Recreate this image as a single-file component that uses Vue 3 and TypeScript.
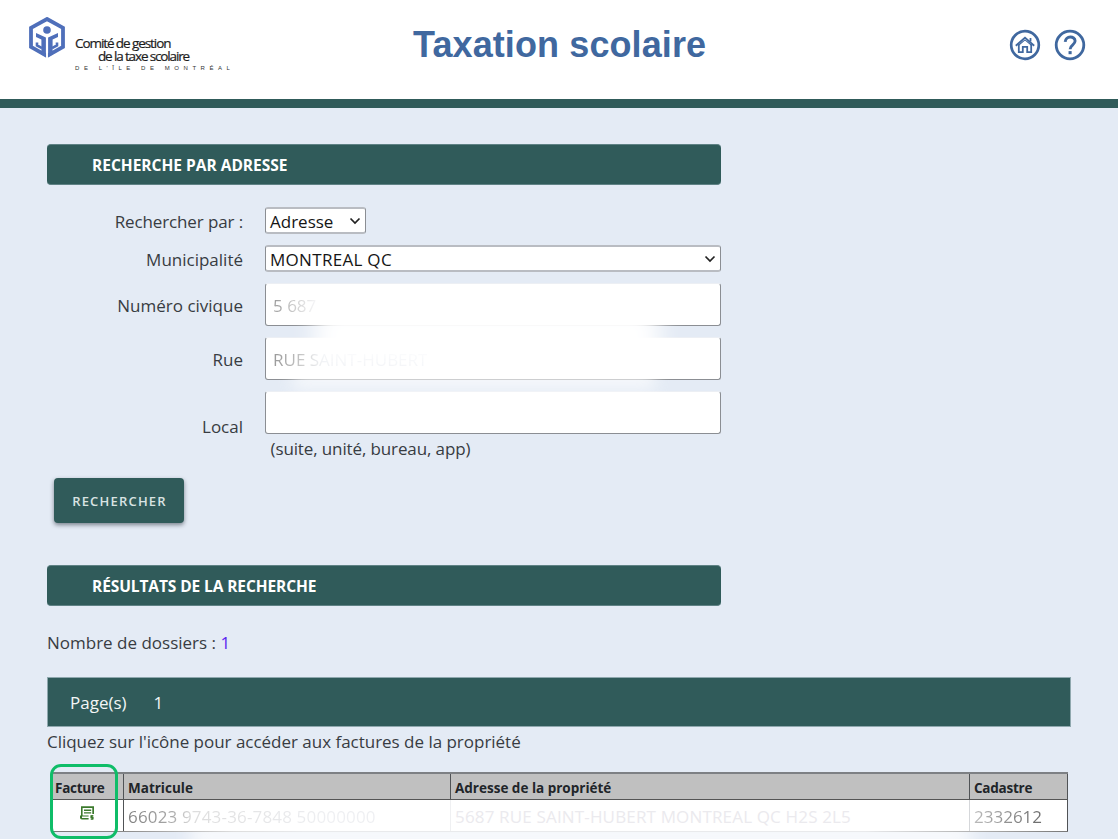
<script setup lang="ts">
interface Dossier {
  matricule: string
  adresse: string
  cadastre: string
}

const dossiers: Dossier[] = [
  {
    matricule: '66023 9743-36-7848 50000000',
    adresse: '5687 RUE SAINT-HUBERT MONTREAL QC H2S 2L5',
    cadastre: '2332612',
  },
]
</script>

<template>
  <div class="page">
    <header class="top">
      <div class="brand">
        <svg class="logo" viewBox="0 0 36 41" width="36" height="41">
          <path d="M18 2 L34 10.8 V30 L18 39 L2 30 V10.8 Z" fill="#fff" stroke="#4f6fba" stroke-width="3.8" />
          <circle cx="18" cy="13" r="3.8" fill="#4f6fba" />
          <path d="M7 16 L16.9 20.4 V40 L12.4 37.6 V22.6 L7 20 Z" fill="#4f6fba" />
          <path d="M29 16 L19.1 20.4 V40 L23.6 37.6 V22.6 L29 20 Z" fill="#4f6fba" />
          <path d="M8 25.4 V28.4 L13 31.2 M28 25.4 V28.4 L23 31.2" fill="none" stroke="#4f6fba" stroke-width="2.6" />
          <path d="M18 20 V41" stroke="#fff" stroke-width="1.9" />
        </svg>
        <div class="brand-text">
          <span class="b1">Comité de gestion</span>
          <span class="b2">de la taxe scolaire</span>
          <span class="b3">DE L'ÎLE DE MONTRÉAL</span>
        </div>
      </div>
      <h1>Taxation scolaire</h1>
      <nav class="tools">
        <svg viewBox="0 0 32 32" width="32" height="32" fill="none" stroke="#40689f">
          <circle cx="16" cy="16" r="13.8" stroke-width="2.7" />
          <path d="M6.8 16.7 L16 8.6 L25.2 16.7 M9.8 15.5 V23.2 H13.8 V17.8 H18.2 V23.2 H22.2 V15.5" stroke-width="1.8" />
          <path d="M9.8 16 L16 10.9 L22.2 16" stroke-width="1.1" />
          <path d="M21.5 9 V12.5" stroke-width="1.8" />
        </svg>
        <svg viewBox="0 0 32 32" width="32" height="32" fill="none" stroke="#40689f">
          <circle cx="16" cy="16" r="13.8" stroke-width="2.8" />
          <path d="M11.2 12.9 C11.4 6.4 21.1 6.6 21.1 12.1 C21.1 15.8 16.1 15.8 16.1 20.2" stroke-width="2.9" />
          <path d="M16.1 22.1 V25.2" stroke-width="3.1" />
        </svg>
      </nav>
    </header>

    <main>
      <h2 class="bar">RECHERCHE PAR ADRESSE</h2>

      <form class="form" @submit.prevent>
        <div class="row r1">
          <label class="l1">Rechercher par :</label>
          <div class="select short">
            <span>Adresse</span>
            <svg viewBox="0 0 12 8" width="12" height="8"><path d="M1.5 1.5 L6 6 L10.5 1.5" fill="none" stroke="#222" stroke-width="1.7" /></svg>
          </div>
        </div>
        <div class="row r2">
          <label>Municipalité</label>
          <div class="select">
            <span class="city">MONTREAL QC</span>
            <svg viewBox="0 0 12 8" width="12" height="8"><path d="M1.5 1.5 L6 6 L10.5 1.5" fill="none" stroke="#222" stroke-width="1.7" /></svg>
          </div>
        </div>
        <div class="row r3">
          <label>Numéro civique</label>
          <div class="input"><span class="civic">5 687</span></div>
        </div>
        <div class="row r3">
          <label>Rue</label>
          <div class="input"><span class="street">RUE SAINT-HUBERT</span></div>
        </div>
        <div class="row r3 r5">
          <label>Local</label>
          <div class="input"></div>
        </div>
        <p class="hint">(suite, unité, bureau, app)</p>
        <div class="veil veil-top"></div>
        <div class="veil veil-bottom"></div>
      </form>

      <button class="go" type="button">RECHERCHER</button>

      <h2 class="bar bar2">RÉSULTATS DE LA RECHERCHE</h2>
      <p class="count"><span>Nombre de dossiers : </span><b>1</b></p>

      <div class="pages"><span>Page(s)</span><span>1</span></div>
      <p class="help">Cliquez sur l'icône pour accéder aux factures de la propriété</p>

      <div class="results">
        <div class="row-veil"></div>
        <div class="tr th">
          <div class="tight">Facture</div>
          <div>Matricule</div>
          <div>Adresse de la propriété</div>
          <div class="tight">Cadastre</div>
        </div>
        <div v-for="d in dossiers" :key="d.matricule" class="tr td">
          <div class="fact">
            <svg viewBox="0 0 16 16" width="16" height="16">
              <path d="M2 1.2 H15 V9 H13.3 V3 H3.6 V10.4 H9.6 V11.6 H3 V13 H9.6 V14.6 H3 Q1 14.6 1 12.8 V10.4 H2 Z" fill="#3b7a2c" />
              <path d="M5 5.2 H12.2 M5 7.9 H12.2" stroke="#3b7a2c" stroke-width="1.4" />
              <path d="M14.4 10.9 H12 V12.5 H14 V14 H11.6 M13 10 V15" fill="none" stroke="#3b7a2c" stroke-width="1.2" />
            </svg>
          </div>
          <div class="mat"><span>{{ d.matricule }}</span></div>
          <div class="adr">{{ d.adresse }}</div>
          <div class="cad"><span>{{ d.cadastre }}</span></div>
        </div>
        <div class="highlight"></div>
      </div>
    </main>
  </div>
</template>

<style>
html,
body {
  margin: 0;
  overflow: hidden;
  background: #e4ebf5;
}
</style>

<style scoped>
* {
  box-sizing: border-box;
}
.page {
  width: 1118px;
  height: 839px;
  overflow: hidden;
  background: #e4ebf5;
  color: #383c42;
  font-family: "Open Sans", "Noto Sans", sans-serif;
  font-size: 17px;
  white-space: nowrap;
}
h1,
h2,
p {
  margin: 0;
}
.top {
  height: 108px;
  background: #fff;
  border-bottom: 9px solid #305b5a;
  display: grid;
  grid-template-columns: 413px 1fr 110px;
}
.brand {
  display: flex;
  padding: 17px 0 0 29px;
}
.logo {
  flex: none;
}
.brand-text {
  display: flex;
  flex-direction: column;
  padding: 20px 0 0 10px;
  color: #1c1c1c;
}
.b1,
.b2 {
  font-size: 13.5px;
  line-height: 13px;
  letter-spacing: -1.08px;
  -webkit-text-stroke: 0.2px #1c1c1c;
}
.b2 {
  padding-left: 23px;
  letter-spacing: -1.14px;
}
.b3 {
  margin-top: 1px;
  font: 6px/8px "Liberation Sans", Arial, sans-serif;
  letter-spacing: 4.55px;
  color: #333;
}
h1 {
  padding-top: 23px;
  font: bold 36px/44px "Liberation Sans", Arial, sans-serif;
  letter-spacing: 0.1px;
  color: #40689f;
}
.tools {
  display: flex;
  gap: 13px;
  padding: 29px 0 0 1.4px;
}
main {
  padding: 36px 47px 0;
}
.bar {
  width: 674px;
  height: 41px;
  padding-left: 45px;
  border: 1px solid #5f8285;
  border-width: 1px 0;
  border-radius: 4px;
  background: #305b5a;
  color: #fff;
  font-size: 15.5px;
  font-weight: 700;
  line-height: 40px;
}
.form {
  position: relative;
  height: 293px;
  padding-top: 22px;
}
.row {
  display: grid;
  grid-template-columns: 196px 456px;
  column-gap: 22px;
  align-items: center;
}
.row label {
  text-align: right;
  padding-top: 2px;
}
.row .l1 {
  letter-spacing: -0.12px;
}
.r1,
.r2 {
  height: 27px;
  margin-bottom: 11px;
}
.r3 {
  height: 43px;
  margin-bottom: 11px;
}
.r5 label {
  align-self: end;
  padding: 0;
  line-height: 14px;
}
.select {
  height: 27px;
  border: 1px solid;
  border-width: 2px 1px;
  border-color: #b9bcc2 #8b8e93;
  border-radius: 3px;
  background: #fff;
  color: #151515;
  display: flex;
  align-items: center;
  justify-content: space-between;
  padding: 1px 4px 0;
}
.city {
  letter-spacing: 0.3px;
}
.select svg {
  margin-top: -1px;
}
.short {
  width: 101px;
}
.input {
  height: 43px;
  border: 1px solid #8b8e93;
  border-top-color: #eceff4;
  border-radius: 3px;
  background: #fff;
  line-height: 43px;
  padding-left: 7px;
}
.civic,
.street,
.mat span,
.cad span {
  background-clip: text;
  color: transparent;
}
.civic {
  background-image: linear-gradient(90deg, #999 0, #ccc 50%, #f4f4f6 100%);
}
.street {
  background-image: linear-gradient(90deg, #999 0, #c4c4c4 20%, #e6e9ee 32%, #eceff4 100%);
}
.hint {
  padding-left: 223.5px;
  margin-top: -11px;
  line-height: 30px;
  letter-spacing: -0.12px;
}
.veil {
  position: absolute;
  background: #fff;
  pointer-events: none;
}
.veil-top {
  left: 268px;
  top: 122px;
  width: 344px;
  height: 56px;
  filter: blur(12px);
}
.veil-bottom {
  left: 246px;
  top: 186px;
  width: 362px;
  height: 18px;
  opacity: 0.7;
  filter: blur(8px);
}
.go {
  display: block;
  width: 130px;
  height: 45px;
  margin-left: 7px;
  padding: 0;
  border: 0;
  border-radius: 4px;
  background: #305b5a;
  box-shadow: 0 2px 4px rgba(20, 30, 40, 0.5);
  color: #d9e3e2;
  font: 600 13px/46px "Open Sans", "Noto Sans", sans-serif;
  letter-spacing: 1.2px;
  text-indent: 1px;
}
.bar2 {
  margin-top: 42px;
  letter-spacing: -0.1px;
}
.count {
  height: 71px;
  line-height: 74px;
}
.count span {
  white-space: pre;
}
.count b {
  font-weight: 400;
  color: #5a27f0;
}
.pages {
  display: flex;
  gap: 27px;
  width: 1024px;
  height: 50px;
  padding-left: 22px;
  line-height: 49px;
  border: 1px solid #8fa8ae;
  background: #305b5a;
  color: #f3f6f6;
}
.help {
  height: 45px;
  line-height: 30px;
  letter-spacing: -0.02px;
}
.results {
  position: relative;
  margin-left: 4px;
  width: 1017px;
}
.tr {
  position: relative;
  display: grid;
  grid-template-columns: 73px 327px 519px 98px;
}
.tr > div {
  border-right: 1px solid #505356;
  padding-left: 4px;
}
.th {
  height: 28px;
  border-top: 2px solid #7d8084;
  border-bottom: 1px solid #555;
  background: #c0c0c0;
  color: #212529;
  font-size: 13.5px;
  font-weight: 700;
  line-height: 29px;
}
.th > div {
  height: 25px;
}
.th .tight {
  letter-spacing: -0.25px;
}
.td {
  height: 32px;
  background: #fff;
  border-bottom: 1px solid;
  border-image: linear-gradient(90deg, #777 0, #888 7%, #ddd 18%, #e9eaec 25%, #e9eaec 80%, #aaa 92%, #777 100%) 1;
  line-height: 33px;
}
.td > div {
  height: 31px;
}
.td > .fact {
  padding: 5px 0 0 28px;
  line-height: 0;
}
.mat,
.adr {
  letter-spacing: 0.16px;
}
.mat span {
  background-image: linear-gradient(90deg, #808080 0, #aaa 18%, #ddd 26%, #eeeff2 80%);
}
.adr {
  color: #ebeaee;
}
.cad span {
  background-image: linear-gradient(90deg, #bbb 0, #707070 90%);
}
.td > .mat {
  border-right-color: #eff0f2;
}
.td > .adr {
  border-right-color: #d5d7da;
}
.row-veil {
  position: absolute;
  left: 140px;
  top: 50px;
  width: 780px;
  height: 28px;
  background: #fff;
  opacity: 0.75;
  filter: blur(9px);
}
.highlight {
  position: absolute;
  left: -1px;
  top: -8px;
  width: 68px;
  height: 75px;
  border: 3px solid #0fbd68;
  border-radius: 11px;
}
</style>
